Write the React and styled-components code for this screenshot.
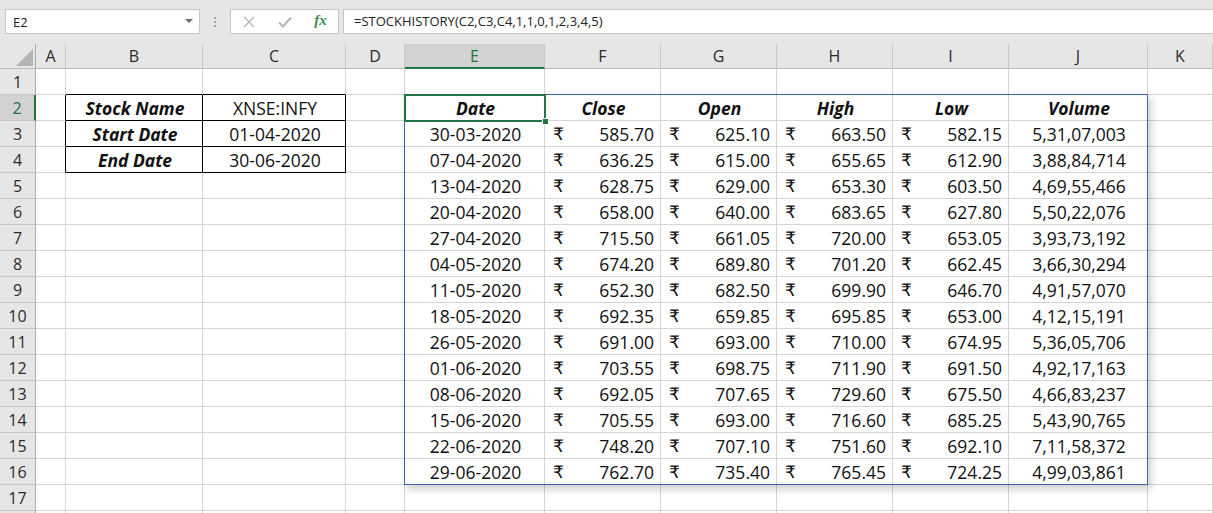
import React from 'react';
import styled, { createGlobalStyle } from 'styled-components';

const GREEN = '#217346';
const GRID = '#d4d4d4';
const SPILL = '#3b64ad';
const FONT = '"Open Sans", "Noto Sans", "DejaVu Sans", sans-serif';

const GlobalStyle = createGlobalStyle`
  html, body { margin: 0; padding: 0; background: #fff; overflow: hidden; }
  body { font-family: ${FONT}; }
  * { box-sizing: border-box; }
`;

const Page = styled.div`
  width: 1213px;
  height: 513px;
  overflow: hidden;
  display: flex;
  flex-direction: column;
  background: #fff;
`;

const FormulaBar = styled.div`
  height: 44px;
  flex: none;
  background: #e6e6e6;
  display: flex;
  align-items: flex-start;
  padding: 9px 0 0 5px;
`;

const NameBox = styled.div`
  width: 195px;
  height: 25px;
  background: #fff;
  border: 1px solid #c6c6c6;
  display: flex;
  align-items: center;
  justify-content: space-between;
  padding: 0 6px 0 7px;
  font-size: 13px;
  color: #222;
`;

const Grip = styled.div`
  width: 3px;
  margin: 8px 13px 0 14px;
  display: flex;
  flex-direction: column;
  gap: 2px;
  & > span {
    width: 2px;
    height: 2px;
    background: #a8a8a8;
  }
`;

const FxBox = styled.div`
  width: 109px;
  height: 25px;
  background: #fff;
  border: 1px solid #c6c6c6;
  display: grid;
  grid-template-columns: 36px 36px 1fr;
  align-items: center;
  justify-items: center;
`;

const FxLabel = styled.span`
  font-family: "Liberation Serif", "DejaVu Serif", serif;
  font-style: italic;
  font-weight: bold;
  font-size: 15px;
  color: #3f8a55;
  line-height: 1;
  margin-top: -2px;
`;

const FormulaInput = styled.div`
  flex: 1;
  height: 25px;
  margin-left: 4px;
  background: #fff;
  border: 1px solid #c6c6c6;
  border-right: none;
  padding-left: 10px;
  font-size: 13px;
  line-height: 23px;
  color: #222;
  white-space: nowrap;
`;

const Sheet = styled.div`
  display: grid;
  grid-template-columns: 36px 30px 137px 143px 59px 140px 116px 116px 116px 116px 139px 1fr;
  grid-template-rows: 25px repeat(18, 26px);
  flex: none;
`;

const Placed = styled.div`
  grid-row: ${(p) => p.$gr};
  grid-column: ${(p) => p.$gc};
`;

const Corner = styled(Placed)`
  background: #e6e6e6;
  border-right: 1px solid #ababab;
  border-bottom: 1px solid #bcbcbc;
  display: flex;
  align-items: flex-end;
  justify-content: flex-end;
  padding: 0 2px 2px 0;
`;

const ColHead = styled(Placed)`
  background: ${(p) => (p.$active ? '#d2d2d2' : '#e6e6e6')};
  border-right: 1px solid #c8c8c8;
  border-bottom: ${(p) => (p.$active ? `2px solid ${GREEN}` : '1px solid #bcbcbc')};
  color: ${(p) => (p.$active ? GREEN : '#2b2b2b')};
  font-size: 16px;
  line-height: 24px;
  text-align: center;
`;

const RowHead = styled(Placed)`
  background: ${(p) => (p.$active ? '#d2d2d2' : '#e6e6e6')};
  border-right: ${(p) => (p.$active ? `2px solid ${GREEN}` : '1px solid #ababab')};
  border-bottom: 1px solid #c8c8c8;
  color: ${(p) => (p.$active ? GREEN : '#2b2b2b')};
  font-size: 16px;
  line-height: 24px;
  text-align: center;
  padding-top: 1px;
`;

const Cell = styled(Placed)`
  background: #fff;
  border-right: 1px solid ${(p) => p.$r};
  border-bottom: 1px solid ${(p) => p.$b};
  font-size: 17.5px;
  line-height: 24px;
  padding: 1px 6px 0 8px;
  color: #111;
  white-space: nowrap;
  overflow: hidden;
  text-align: ${(p) => p.$align || 'left'};
  font-weight: ${(p) => (p.$bold ? 700 : 400)};
  font-style: ${(p) => (p.$bold ? 'italic' : 'normal')};
`;

const MoneyCell = styled(Cell)`
  display: flex;
  justify-content: space-between;
`;

const Rupee = styled.span`
  font-family: "DejaVu Sans", "Noto Sans", sans-serif;
  font-size: 17px;
`;

const SpillFrame = styled.div`
  grid-column: 6 / 12;
  grid-row: 3 / 18;
  margin: -1px 0 0 -1px;
  border: 1px solid ${SPILL};
  box-shadow: 3px 4px 8px rgba(0, 0, 0, 0.2);
  pointer-events: none;
  z-index: 1;
`;

const Selection = styled.div`
  grid-column: 6 / 7;
  grid-row: 3 / 4;
  margin: -1px;
  border: 2px solid ${GREEN};
  position: relative;
  pointer-events: none;
  z-index: 2;
`;

const FillHandle = styled.span`
  position: absolute;
  right: -5px;
  bottom: -5px;
  width: 7px;
  height: 7px;
  background: ${GREEN};
  border: 1px solid #fff;
`;

const COLS = ['A', 'B', 'C', 'D', 'E', 'F', 'G', 'H', 'I', 'J', 'K'];
const ROWS = 18;
const INPUTS = {
  2: ['Stock Name', 'XNSE:INFY'],
  3: ['Start Date', '01-04-2020'],
  4: ['End Date', '30-06-2020'],
};
const HEAD = ['Date', 'Close', 'Open', 'High', 'Low', 'Volume'];
const DATA = [
  ['30-03-2020', '585.70', '625.10', '663.50', '582.15', '5,31,07,003'],
  ['07-04-2020', '636.25', '615.00', '655.65', '612.90', '3,88,84,714'],
  ['13-04-2020', '628.75', '629.00', '653.30', '603.50', '4,69,55,466'],
  ['20-04-2020', '658.00', '640.00', '683.65', '627.80', '5,50,22,076'],
  ['27-04-2020', '715.50', '661.05', '720.00', '653.05', '3,93,73,192'],
  ['04-05-2020', '674.20', '689.80', '701.20', '662.45', '3,66,30,294'],
  ['11-05-2020', '652.30', '682.50', '699.90', '646.70', '4,91,57,070'],
  ['18-05-2020', '692.35', '659.85', '695.85', '653.00', '4,12,15,191'],
  ['26-05-2020', '691.00', '693.00', '710.00', '674.95', '5,36,05,706'],
  ['01-06-2020', '703.55', '698.75', '711.90', '691.50', '4,92,17,163'],
  ['08-06-2020', '692.05', '707.65', '729.60', '675.50', '4,66,83,237'],
  ['15-06-2020', '705.55', '693.00', '716.60', '685.25', '5,43,90,765'],
  ['22-06-2020', '748.20', '707.10', '751.60', '692.10', '7,11,58,372'],
  ['29-06-2020', '762.70', '735.40', '765.45', '724.25', '4,99,03,861'],
];

const inBox = (r, c) => r >= 2 && r <= 4 && (c === 1 || c === 2);

function renderCell(r, c) {
  const right = inBox(r, c) || inBox(r, c + 1) ? '#000' : GRID;
  const bottom = inBox(r, c) || inBox(r + 1, c) ? '#000' : GRID;
  const key = `${COLS[c]}${r}`;
  const common = { key, $r: right, $b: bottom, $gr: r + 1, $gc: c + 2 };

  if (INPUTS[r] && c === 1) {
    return <Cell {...common} $align="center" $bold>{INPUTS[r][0]}</Cell>;
  }
  if (INPUTS[r] && c === 2) {
    return <Cell {...common} $align="center">{INPUTS[r][1]}</Cell>;
  }
  if (r === 2 && c >= 4 && c <= 9) {
    return <Cell {...common} $align="center" $bold>{HEAD[c - 4]}</Cell>;
  }
  if (r >= 3 && r <= 16 && c >= 4 && c <= 9) {
    const v = DATA[r - 3][c - 4];
    if (c >= 5 && c <= 8) {
      return (
        <MoneyCell {...common}>
          <Rupee>₹</Rupee>
          <span>{v}</span>
        </MoneyCell>
      );
    }
    return <Cell {...common} $align="center">{v}</Cell>;
  }
  return <Cell {...common} />;
}

const CancelIcon = () => (
  <svg width="12" height="12" viewBox="0 0 12 12">
    <path d="M1 1 L11 11 M11 1 L1 11" stroke="#b5b5b5" strokeWidth="1.3" fill="none" />
  </svg>
);

const EnterIcon = () => (
  <svg width="14" height="12" viewBox="0 0 14 12">
    <path d="M1 6.5 L5 10.5 L13 1.5" stroke="#b5b5b5" strokeWidth="2" fill="none" />
  </svg>
);

const DropArrow = () => (
  <svg width="8" height="5" viewBox="0 0 8 5">
    <path d="M0 0 L8 0 L4 4 Z" fill="#6d6d6d" />
  </svg>
);

const CornerTriangle = () => (
  <svg width="17" height="17" viewBox="0 0 17 17">
    <path d="M17 0 L17 17 L0 17 Z" fill="#b4b4b4" />
  </svg>
);

export default function App() {
  const rows = [];
  for (let r = 1; r <= ROWS; r++) {
    rows.push(
      <RowHead key={`rh${r}`} $gr={r + 1} $gc={1} $active={r === 2}>
        {r < ROWS ? r : null}
      </RowHead>
    );
    for (let c = 0; c < COLS.length; c++) rows.push(renderCell(r, c));
  }

  return (
    <Page>
      <GlobalStyle />
      <FormulaBar>
        <NameBox>
          <span>E2</span>
          <DropArrow />
        </NameBox>
        <Grip>
          <span />
          <span />
          <span />
        </Grip>
        <FxBox>
          <CancelIcon />
          <EnterIcon />
          <FxLabel>fx</FxLabel>
        </FxBox>
        <FormulaInput>=STOCKHISTORY(C2,C3,C4,1,1,0,1,2,3,4,5)</FormulaInput>
      </FormulaBar>
      <Sheet>
        <Corner $gr={1} $gc={1}>
          <CornerTriangle />
        </Corner>
        {COLS.map((col, i) => (
          <ColHead key={col} $gr={1} $gc={i + 2} $active={col === 'E'}>
            {col}
          </ColHead>
        ))}
        {rows}
        <SpillFrame />
        <Selection>
          <FillHandle />
        </Selection>
      </Sheet>
    </Page>
  );
}
